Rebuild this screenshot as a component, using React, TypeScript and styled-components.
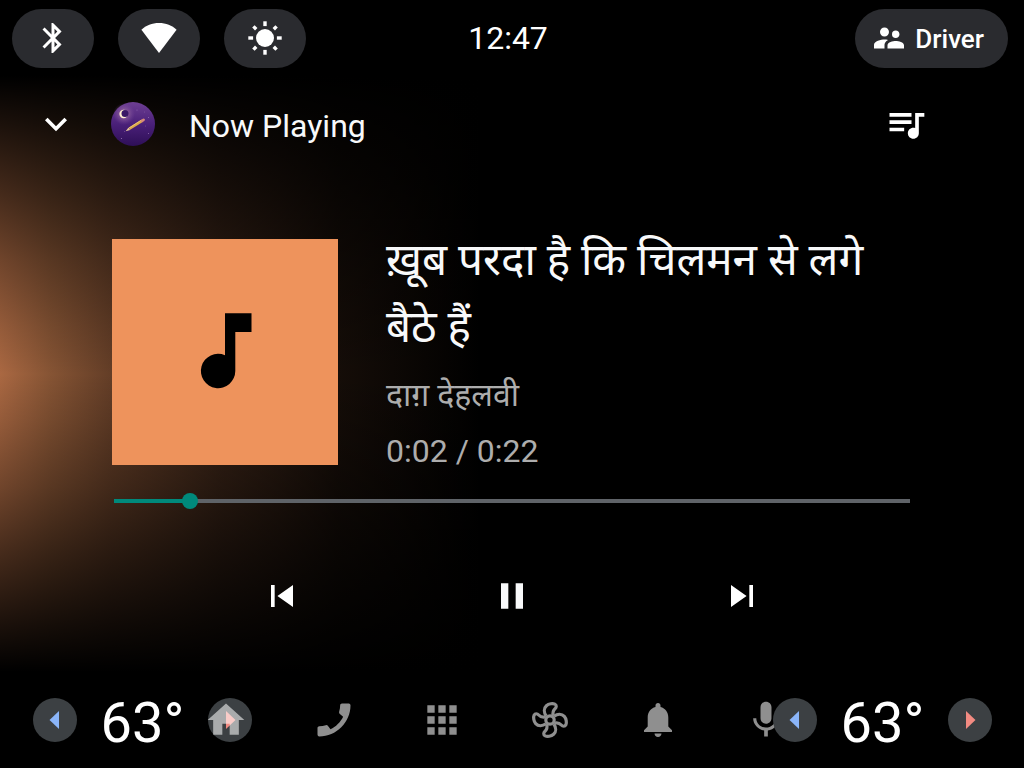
import React, { useState } from "react";
import styled, { createGlobalStyle } from "styled-components";
import {
  MdApps,
  MdBluetooth,
  MdCall,
  MdExpandMore,
  MdHome,
  MdMic,
  MdPause,
  MdQueueMusic,
  MdSkipNext,
  MdSkipPrevious,
  MdSupervisorAccount,
} from "react-icons/md";

const GlobalStyle = createGlobalStyle`
  * { box-sizing: border-box; }
  body {
    margin: 0;
    background: #000;
    color: #fff;
    font-family: Roboto, "Noto Sans Devanagari", "Noto Sans", sans-serif;
  }
  button {
    margin: 0;
    padding: 0;
    border: 0;
    background: none;
    color: inherit;
    font: inherit;
    cursor: pointer;
  }
  svg { display: block; }
`;

const Screen = styled.div`
  display: flex;
  flex-direction: column;
  min-height: 100vh;
`;

const StatusBar = styled.header`
  display: grid;
  grid-template-columns: 1fr auto 1fr;
  align-items: center;
  height: 76px;
  padding: 0 16px 0 12px;
`;

const StatusGroup = styled.div`
  display: flex;
  gap: 24px;
`;

const Pill = styled.button`
  display: flex;
  align-items: center;
  justify-content: center;
  gap: 8px;
  height: 59px;
  min-width: 82px;
  border-radius: 30px;
  background: #2a2b2f;
`;

const DriverPill = styled(Pill)`
  justify-self: end;
  padding: 0 24px 0 16px;
  font-size: 26px;
  font-weight: 500;
  line-height: 32px;
`;

const DriverName = styled.span`
  padding-top: 2px;
`;

const Clock = styled.time`
  padding-right: 4px;
  font-size: 32px;
  line-height: 40px;
`;

const Player = styled.main`
  flex: 1;
  display: flex;
  flex-direction: column;
  background:
    linear-gradient(
      to bottom,
      #000 0%,
      rgba(0, 0, 0, 0.84) 8%,
      rgba(0, 0, 0, 0.59) 20%,
      rgba(0, 0, 0, 0.34) 31%,
      rgba(0, 0, 0, 0.13) 42%,
      rgba(0, 0, 0, 0) 50%,
      rgba(0, 0, 0, 0.13) 58%,
      rgba(0, 0, 0, 0.34) 69%,
      rgba(0, 0, 0, 0.59) 80%,
      rgba(0, 0, 0, 0.84) 92%,
      #000 100%
    ),
    linear-gradient(
      to right,
      #aa6842 0,
      #865434 50px,
      #643e27 110px,
      #372216 220px,
      #150d08 338px,
      #000 480px
    );
`;

const PlayerHeader = styled.div`
  display: flex;
  align-items: center;
  gap: 33px;
  padding: 26px 96px 0 34px;
`;

const IconButton = styled.button<{ $tint?: string }>`
  width: 44px;
  height: 44px;
  color: ${(p) => p.$tint || "#fff"};
`;

const Heading = styled.h1`
  flex: 1;
  margin: 0;
  padding: 3px 0 0 1px;
  font-size: 32px;
  font-weight: 400;
  line-height: 40px;
  color: #f8f9fa;
`;

const Track = styled.section`
  display: flex;
  gap: 48px;
  margin: 93px 112px 0;
`;

const Artwork = styled.div`
  flex: none;
  display: grid;
  place-items: center;
  width: 226px;
  height: 226px;
  background: #ee935c;
`;

const TrackInfo = styled.div`
  flex: 1;
  min-width: 0;
  height: 226px;
`;

const Title = styled.h2`
  margin: -12px 0 6px;
  font-size: 44px;
  font-weight: 400;
  line-height: 67px;
  color: #f8f9fa;
`;

const Detail = styled.p`
  margin: 0;
  font-size: 32px;
  line-height: 56px;
  color: #adadad;
`;

const Seek = styled.input`
  appearance: none;
  display: block;
  height: 16px;
  margin: 28px 114px 0;
  background: none;

  &::-webkit-slider-runnable-track {
    height: 4px;
    background: linear-gradient(
      to right,
      #00897b calc(8px + var(--played) * (100% - 16px)),
      #5f6368 calc(8px + var(--played) * (100% - 16px))
    );
  }
  &::-webkit-slider-thumb {
    appearance: none;
    width: 16px;
    height: 16px;
    margin-top: -6px;
    border-radius: 50%;
    background: #00897b;
  }
`;

const Controls = styled.div`
  display: grid;
  grid-template-columns: repeat(3, 1fr);
  justify-items: center;
  margin: 65px 167px 0;
`;

const BottomBar = styled.footer`
  display: grid;
  align-items: center;
  height: 96px;

  > * { grid-area: 1 / 1; }
`;

const Climate = styled.div<{ $side: "start" | "end" }>`
  justify-self: ${(p) => p.$side};
  display: flex;
  align-items: center;
  justify-content: space-between;
  width: 219px;
  margin: 0 32px 0 33px;
`;

const Temperature = styled.output`
  padding-top: 5px;
  font-size: 56px;
  line-height: 64px;
`;

const Round = styled.button<{ $tint: string }>`
  width: 44px;
  height: 44px;
  border-radius: 50%;
  background: #3c4043;
  color: ${(p) => p.$tint};
`;

const Dock = styled.nav`
  display: grid;
  grid-template-columns: repeat(6, 1fr);
  justify-items: center;
  margin: 0 204px 0 172px;
`;

const WifiIcon = () => (
  <svg width="36" height="36" viewBox="0 0 36 36" fill="currentColor">
    <path d="M18 33 0.4 9.8C5 5.3 11 3 18 3s13 2.3 17.6 6.8z" />
  </svg>
);

const BrightnessIcon = () => (
  <svg width="36" height="36" viewBox="-18 -18 36 36" fill="currentColor">
    <circle r="9" />
    {[0, 90, 180, 270].map((a) => (
      <rect key={a} x="-1.7" y="-16.7" width="3.4" height="4.8" transform={`rotate(${a})`} />
    ))}
    {[45, 135, 225, 315].map((a) => (
      <rect key={a} x="-1.7" y="-16.4" width="3.4" height="4" transform={`rotate(${a})`} />
    ))}
  </svg>
);

const NoteIcon = () => (
  <svg width="100" height="100" viewBox="0 0 100 100">
    <path d="M50 11.3h26.5v18.7H60.3v39A17.2 17.2 0 1 1 50 53.2z" />
  </svg>
);

const FanIcon = () => (
  <svg width="44" height="44" viewBox="-22 -22 44 44" fill="none" stroke="currentColor" strokeWidth="3.2">
    <circle r="4.2" />
    {[0, 90, 180, 270].map((a) => (
      <path
        key={a}
        transform={`rotate(${a})`}
        d="M-3.8-4C-6.2-7.5-6.4-11.800-3.600-14.300C-1.200-16.400 2.800-16.800 4.800-15.900C6.800-14.900 6.600-12.700 5-11.300C3-9.500 2.500-7.500 3.200-4.200"
      />
    ))}
  </svg>
);

const BellIcon = () => (
  <svg width="44" height="44" viewBox="0 0 44 44" fill="currentColor">
    <path d="M22 5c1.5 0 2.5 1 2.5 2.5v1.6C29.4 10.4 32.3 14.3 32.3 19.5v9L36 32.2V34H8v-1.8l3.7-3.7v-9C11.7 14.3 14.6 10.4 19.5 9.1V7.5C19.5 6 20.5 5 22 5zM18.500 35.600h7C25.300 37.700 24 39 22 39s-3.300-1.300-3.500-3.400z" />
  </svg>
);

const Arrow = ({ back }: { back?: boolean }) => (
  <svg width="44" height="44" viewBox="0 0 44 44" fill="currentColor">
    <path d={back ? "M26 13v18l-9.5-9z" : "M18 13v18l9.5-9z"} />
  </svg>
);

const SourceLogo = () => (
  <svg width="44" height="44" viewBox="0 0 44 44" role="img" aria-label="Source app">
    <defs>
      <linearGradient id="sky" x1="0" y1="0" x2="0" y2="1">
        <stop offset="0" stopColor="#6e3f93" />
        <stop offset="0.5" stopColor="#4a2079" />
        <stop offset="1" stopColor="#2e0f57" />
      </linearGradient>
      <radialGradient id="halo">
        <stop offset="0" stopColor="#d9a8b0" stopOpacity="0.9" />
        <stop offset="0.4" stopColor="#a878a8" stopOpacity="0.5" />
        <stop offset="1" stopColor="#8050a0" stopOpacity="0" />
      </radialGradient>
    </defs>
    <circle cx="22" cy="22" r="22" fill="url(#sky)" />
    <circle cx="13" cy="12" r="11" fill="url(#halo)" />
    <circle cx="12.6" cy="12" r="4.2" fill="#fff0d0" />
    <circle cx="14" cy="11.5" r="3.5" fill="#3a1866" />
    <path d="M18.5 26.7 31 18.8" stroke="#dba849" strokeWidth="2.6" />
    <path d="M18 26 30.5 18" stroke="#f0cc78" strokeWidth="0.8" />
    <path d="M14.6 29.3l3-3.7 1.5 2.3z" fill="#e8c79a" />
    <path d="M31 18.8l1.6-1" stroke="#d88a7a" strokeWidth="2.6" strokeLinecap="round" />
    <g fill="#9470b4">
      <circle cx="26" cy="8" r="0.5" />
      <circle cx="33.5" cy="10" r="0.4" />
      <circle cx="37.5" cy="15.5" r="0.5" />
      <circle cx="34.5" cy="24" r="0.4" />
      <circle cx="37.5" cy="31.5" r="0.5" />
      <circle cx="13.5" cy="29.5" r="0.4" />
      <circle cx="10.5" cy="36.5" r="0.6" />
    </g>
  </svg>
);

const MirroredCall = styled(MdCall)`
  transform: scaleX(-1);
`;

const DOCK_TINT = "rgba(255, 255, 255, 0.56)";
const DURATION = 22900;

const TemperatureControl = ({ side }: { side: "start" | "end" }) => {
  const [degrees, setDegrees] = useState(63);
  return (
    <Climate $side={side}>
      <Round $tint="#8ab4f8" aria-label="Cooler" onClick={() => setDegrees(degrees - 1)}>
        <Arrow back />
      </Round>
      <Temperature>{degrees}°</Temperature>
      <Round $tint="#f28b82" aria-label="Warmer" onClick={() => setDegrees(degrees + 1)}>
        <Arrow />
      </Round>
    </Climate>
  );
};

export default function App() {
  const [position, setPosition] = useState(2000);
  const seconds = String(Math.floor(position / 1000)).padStart(2, "0");

  return (
    <>
      <GlobalStyle />
      <Screen>
        <StatusBar>
          <StatusGroup>
            <Pill aria-label="Bluetooth"><MdBluetooth size={36} /></Pill>
            <Pill aria-label="Wi-Fi"><WifiIcon /></Pill>
            <Pill aria-label="Brightness"><BrightnessIcon /></Pill>
          </StatusGroup>
          <Clock>12:47</Clock>
          <DriverPill>
            <MdSupervisorAccount size={36} />
            <DriverName>Driver</DriverName>
          </DriverPill>
        </StatusBar>

        <Player>
          <PlayerHeader>
            <IconButton aria-label="Collapse"><MdExpandMore size={44} /></IconButton>
            <SourceLogo />
            <Heading>Now Playing</Heading>
            <IconButton aria-label="Queue"><MdQueueMusic size={44} /></IconButton>
          </PlayerHeader>

          <Track>
            <Artwork><NoteIcon /></Artwork>
            <TrackInfo lang="hi">
              <Title>ख़ूब परदा है कि चिलमन से लगे बैठे हैं</Title>
              <Detail>दाग़ देहलवी</Detail>
              <Detail>0:{seconds} / 0:22</Detail>
            </TrackInfo>
          </Track>

          <Seek
            type="range"
            aria-label="Playback position"
            min={0}
            max={DURATION}
            value={position}
            onChange={(e) => setPosition(Number(e.target.value))}
            style={{ "--played": position / DURATION } as React.CSSProperties}
          />

          <Controls>
            <IconButton aria-label="Previous"><MdSkipPrevious size={44} /></IconButton>
            <IconButton aria-label="Pause" $tint="#f8f9fa"><MdPause size={44} /></IconButton>
            <IconButton aria-label="Next"><MdSkipNext size={44} /></IconButton>
          </Controls>
        </Player>

        <BottomBar>
          <TemperatureControl side="start" />
          <Dock aria-label="Apps">
            <IconButton $tint={DOCK_TINT} aria-label="Home"><MdHome size={44} /></IconButton>
            <IconButton $tint={DOCK_TINT} aria-label="Phone"><MirroredCall size={44} /></IconButton>
            <IconButton $tint={DOCK_TINT} aria-label="All apps"><MdApps size={44} /></IconButton>
            <IconButton $tint="#8f8f8f" aria-label="Fan"><FanIcon /></IconButton>
            <IconButton $tint={DOCK_TINT} aria-label="Notifications"><BellIcon /></IconButton>
            <IconButton $tint={DOCK_TINT} aria-label="Assistant"><MdMic size={44} /></IconButton>
          </Dock>
          <TemperatureControl side="end" />
        </BottomBar>
      </Screen>
    </>
  );
}
